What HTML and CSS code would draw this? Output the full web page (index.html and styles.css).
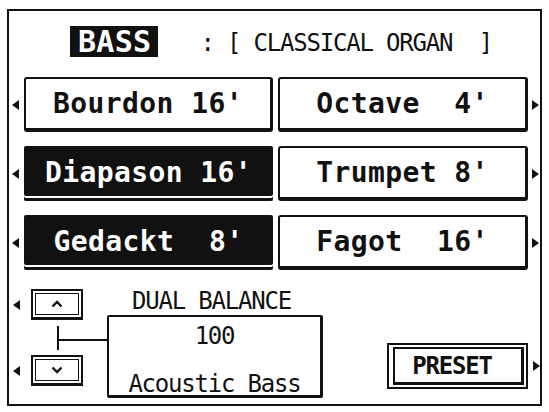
FILE: index.html
```html
<!DOCTYPE html>
<html lang="en">
<head>
    <meta charset="UTF-8">
    <meta name="viewport" content="width=device-width, initial-scale=1.0">
    <title>Bass Voice</title>
    <link rel="stylesheet" href="styles.css">
</head>
<body>
    <div class="panel">
        <div class="header">
            <span class="part">BASS</span>
            <span class="voice-set">: [ CLASSICAL ORGAN  ]</span>
        </div>

        <!-- voice rows -->
        <div class="rows">
            <div class="row">
                <span class="arrow arrow-left"></span>
                <div class="stop">Bourdon 16'</div>
                <div class="stop">Octave  4'</div>
                <span class="arrow arrow-right"></span>
            </div>
            <div class="row">
                <span class="arrow arrow-left"></span>
                <div class="stop selected">Diapason 16'</div>
                <div class="stop">Trumpet 8'</div>
                <span class="arrow arrow-right"></span>
            </div>
            <div class="row">
                <span class="arrow arrow-left"></span>
                <div class="stop selected">Gedackt  8'</div>
                <div class="stop">Fagot  16'</div>
                <span class="arrow arrow-right"></span>
            </div>
        </div>

        <!-- dual balance -->
        <div class="bottom">
            <div class="updown">
                <div class="step">
                    <span class="arrow arrow-left"></span>
                    <div class="step-btn">
                        <svg width="12" height="8" viewBox="0 0 12 8"><polyline points="1.5,6.5 6,2 10.5,6.5" fill="none" stroke="#111" stroke-width="2.4"/></svg>
                    </div>
                </div>
                <div class="link"></div>
                <div class="step">
                    <span class="arrow arrow-left"></span>
                    <div class="step-btn">
                        <svg width="12" height="8" viewBox="0 0 12 8"><polyline points="1.5,1.5 6,6 10.5,1.5" fill="none" stroke="#111" stroke-width="2.4"/></svg>
                    </div>
                </div>
            </div>
            <div class="balance">
                <div class="balance-label">DUAL BALANCE</div>
                <div class="balance-box">
                    <div>100</div>
                    <div>Acoustic Bass</div>
                </div>
            </div>
            <div class="preset-wrap">
                <div class="preset"><div class="preset-inner">PRESET</div></div>
                <span class="arrow arrow-right"></span>
            </div>
        </div>
    </div>
</body>
</html>
```

FILE: styles.css
```css
* {
    box-sizing: border-box;
}

body {
    margin: 0;
    background: #fff;
    color: #111;
    font-family: "DejaVu Sans Mono", monospace;
}

.panel {
    margin: 9px 0 0 7px;
    width: 535px;
    height: 397px;
    border: 2px solid #111;
}

.header {
    display: flex;
    align-items: center;
    padding: 15px 0 0 61px;
}
.part {
    height: 31px;
    line-height: 31px;
    padding: 0 7px 0 8px;
    background: #111;
    color: #fff;
    font-size: 30px;
    font-weight: bold;
    letter-spacing: 0.3px;
}
.voice-set {
    margin: 3px 0 0 42px;
    font-size: 24px;
    letter-spacing: -1.2px;
    white-space: pre;
}

.rows {
    margin-top: 20px;
    display: flex;
    flex-direction: column;
    gap: 14px;
}
.row {
    display: flex;
    align-items: center;
    height: 55px;
}

.arrow {
    width: 0;
    height: 0;
    border-top: 5px solid transparent;
    border-bottom: 5px solid transparent;
}
.arrow-left {
    border-right: 7px solid #111;
    margin: 0 5px 0 3px;
}
.arrow-right {
    border-left: 7px solid #111;
    margin-left: 4px;
}

.stop {
    width: 249px;
    height: 55px;
    border: 2px solid #111;
    border-right-width: 3px;
    border-bottom-width: 4px;
    border-radius: 3px;
    display: flex;
    align-items: center;
    justify-content: center;
    font-size: 28px;
    font-weight: bold;
    letter-spacing: 0.4px;
    white-space: pre;
}
.stop + .stop {
    width: 250px;
    margin-left: 5px;
}
.stop.selected {
    background: #111;
    color: #fff;
    border: none;
    border-radius: 2px;
    padding-bottom: 3px;
    box-shadow: inset 0 -3px 0 #111, inset 0 -5px 0 #fff;
}

.bottom {
    display: flex;
    align-items: flex-start;
    margin-top: 19px;
}

.updown {
    width: 74px;
}
.step {
    display: flex;
    align-items: center;
}
.step .arrow-left {
    margin: 0 11px 0 4px;
}
.step-btn {
    width: 52px;
    height: 31px;
    border: 2px solid #111;
    border-bottom-width: 3px;
    box-shadow: inset 0 0 0 2px #fff, inset 0 0 0 3px #111;
    display: flex;
    align-items: center;
    justify-content: center;
}
.link {
    width: 50px;
    height: 24px;
    margin: 6px 0 5px 48px;
    border-left: 2px solid #111;
    background: linear-gradient(#111, #111) 0 13px / 100% 2px no-repeat;
}

.balance {
    width: 216px;
    margin-left: 24px;
    font-size: 24px;
    letter-spacing: -1.2px;
}
.balance-label {
    line-height: 24px;
    padding-left: 25px;
}
.balance-box {
    margin-top: 2px;
    height: 83px;
    padding-top: 8px;
    border: 2px solid #111;
    border-right-width: 3px;
    border-bottom-width: 3px;
    border-radius: 2px;
    display: flex;
    flex-direction: column;
    align-items: center;
    justify-content: space-between;
    line-height: 22px;
}

.preset-wrap {
    margin: 54px 0 0 auto;
    display: flex;
    align-items: center;
}
.preset {
    width: 141px;
    height: 46px;
    padding: 2px 2px 2px 4px;
    border: 2px solid #111;
}
.preset-inner {
    height: 100%;
    padding-right: 12px;
    border: 2px solid #111;
    border-right-width: 3px;
    border-bottom-width: 3px;
    display: flex;
    align-items: center;
    justify-content: center;
    font-size: 24px;
    font-weight: bold;
    letter-spacing: -1.2px;
}
.preset-wrap .arrow-right {
    margin-left: 5px;
}
```
